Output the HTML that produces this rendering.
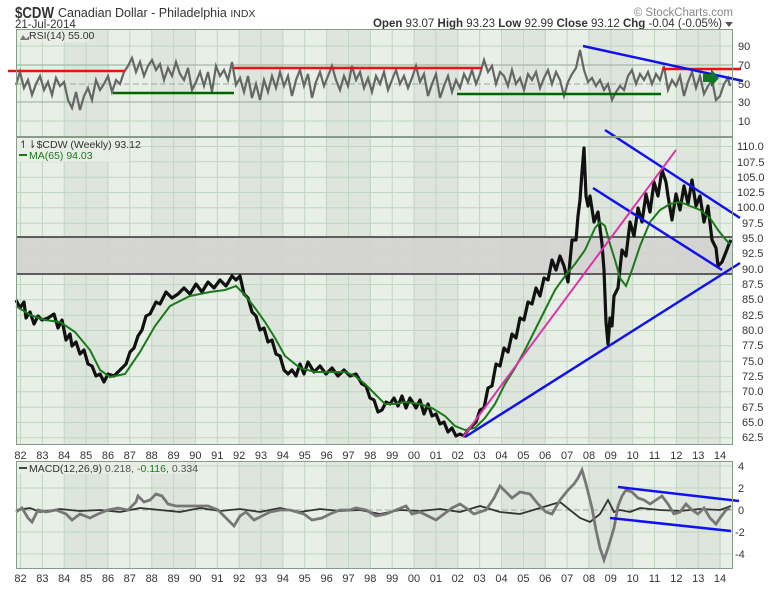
<!DOCTYPE html>
<html><head><meta charset="utf-8"><style>
body{margin:0;background:#fff;width:780px;height:586px;overflow:hidden;font-family:"Liberation Sans",sans-serif}
svg text{font-family:"Liberation Sans",sans-serif}
</style></head><body>
<svg width="780" height="586" xmlns="http://www.w3.org/2000/svg">
<!-- header -->
<text x="15" y="18" font-size="16" font-weight="bold" fill="#333" textLength="39" lengthAdjust="spacingAndGlyphs">$CDW</text>
<text x="58" y="17" font-size="12.5" fill="#333">Canadian Dollar - Philadelphia <tspan font-size="10.5">INDX</tspan></text>
<text x="15" y="28" font-size="11.5" fill="#333">21-Jul-2014</text>
<text x="733" y="16" font-size="11.5" fill="#888" text-anchor="end">© StockCharts.com</text>
<text x="722" y="27" font-size="11.5" fill="#333" text-anchor="end"><tspan font-weight="bold">Open</tspan> 93.07  <tspan font-weight="bold">High</tspan> 93.23  <tspan font-weight="bold">Low</tspan> 92.99  <tspan font-weight="bold">Close</tspan> 93.12  <tspan font-weight="bold">Chg</tspan> -0.04 (-0.05%)</text>
<path d="M725 22h8l-4 5z" fill="#555"/>

<!-- panel backgrounds -->
<g fill="#e8efe6">
<rect x="16" y="29" width="717" height="108"/>
<rect x="16" y="137" width="717" height="308"/>
<rect x="16" y="461" width="717" height="108"/>
</g>
<g fill="#dde5dc">
<rect x="64" y="29" width="44" height="108"/><rect x="152" y="29" width="44" height="108"/><rect x="239" y="29" width="44" height="108"/><rect x="327" y="29" width="44" height="108"/><rect x="414" y="29" width="44" height="108"/><rect x="502" y="29" width="44" height="108"/><rect x="589" y="29" width="44" height="108"/><rect x="677" y="29" width="44" height="108"/>
<rect x="64" y="137" width="44" height="308"/><rect x="152" y="137" width="44" height="308"/><rect x="239" y="137" width="44" height="308"/><rect x="327" y="137" width="44" height="308"/><rect x="414" y="137" width="44" height="308"/><rect x="502" y="137" width="44" height="308"/><rect x="589" y="137" width="44" height="308"/><rect x="677" y="137" width="44" height="308"/>
<rect x="64" y="461" width="44" height="108"/><rect x="152" y="461" width="44" height="108"/><rect x="239" y="461" width="44" height="108"/><rect x="327" y="461" width="44" height="108"/><rect x="414" y="461" width="44" height="108"/><rect x="502" y="461" width="44" height="108"/><rect x="589" y="461" width="44" height="108"/><rect x="677" y="461" width="44" height="108"/>
</g>
<!-- vertical grid -->
<g stroke="#bfd6bf" stroke-width="1">
<path d="M20.5 29V137M42.4 29V137M64.2 29V137M86.1 29V137M108 29V137M129.8 29V137M151.7 29V137M173.6 29V137M195.4 29V137M217.3 29V137M239.1 29V137M261 29V137M282.9 29V137M304.7 29V137M326.6 29V137M348.5 29V137M370.3 29V137M392.2 29V137M414 29V137M435.9 29V137M457.8 29V137M479.6 29V137M501.5 29V137M523.4 29V137M545.2 29V137M567.1 29V137M589 29V137M610.8 29V137M632.7 29V137M654.5 29V137M676.4 29V137M698.3 29V137M720 29V137"/>
<path d="M20.5 137V445M42.4 137V445M64.2 137V445M86.1 137V445M108 137V445M129.8 137V445M151.7 137V445M173.6 137V445M195.4 137V445M217.3 137V445M239.1 137V445M261 137V445M282.9 137V445M304.7 137V445M326.6 137V445M348.5 137V445M370.3 137V445M392.2 137V445M414 137V445M435.9 137V445M457.8 137V445M479.6 137V445M501.5 137V445M523.4 137V445M545.2 137V445M567.1 137V445M589 137V445M610.8 137V445M632.7 137V445M654.5 137V445M676.4 137V445M698.3 137V445M720 137V445"/>
<path d="M20.5 461V569M42.4 461V569M64.2 461V569M86.1 461V569M108 461V569M129.8 461V569M151.7 461V569M173.6 461V569M195.4 461V569M217.3 461V569M239.1 461V569M261 461V569M282.9 461V569M304.7 461V569M326.6 461V569M348.5 461V569M370.3 461V569M392.2 461V569M414 461V569M435.9 461V569M457.8 461V569M479.6 461V569M501.5 461V569M523.4 461V569M545.2 461V569M567.1 461V569M589 461V569M610.8 461V569M632.7 461V569M654.5 461V569M676.4 461V569M698.3 461V569M720 461V569"/>
<path d="M16 146.5H733M16 161.8H733M16 177.2H733M16 192.5H733M16 207.8H733M16 223.2H733M16 238.5H733M16 253.8H733M16 269.2H733M16 284.5H733M16 299.8H733M16 315.2H733M16 330.5H733M16 345.8H733M16 361.2H733M16 376.5H733M16 391.8H733M16 407.2H733M16 422.5H733M16 437.8H733"/>
<path d="M16 46H733M16 121H733M16 466H733M16 488H733M16 532H733M16 554H733"/>
</g>
<g stroke="#9aaa9a" stroke-width="1">
<path d="M16 65H733M16 102H733"/>
<path d="M16 84H733M16 510H733" stroke-dasharray="6 3"/>
</g>
<!-- gray band -->
<rect x="16" y="237" width="717" height="37" fill="#d3d3d0" opacity="0.9"/>
<path d="M16 237H733M16 274H733" stroke="#333" stroke-width="1.5"/>

<!-- RSI line -->
<polyline fill="none" stroke="#666" stroke-width="2.2" points="16,85 20,72 24,88 28,80 32,95 36,84 40,76 44,90 48,82 52,95 56,78 60,86 64,82 68,100 72,108 76,92 80,110 84,96 88,88 92,100 96,80 100,90 104,84 108,76 112,92 116,80 120,84 124,72 128,66 132,58 136,72 140,62 144,76 148,66 152,60 156,70 160,64 164,80 168,68 172,76 176,62 180,74 184,80 188,68 192,90 196,82 200,72 204,86 208,72 212,92 216,66 220,76 224,70 228,80 232,62 236,85 240,78 244,92 248,76 252,98 256,84 260,100 264,80 268,92 272,76 276,88 280,72 284,86 288,76 292,96 296,80 300,70 304,86 308,74 312,98 316,82 320,72 324,86 328,76 332,66 336,80 340,90 344,76 348,86 352,66 356,80 360,72 364,88 368,78 372,92 376,76 380,84 384,72 388,90 392,80 396,70 400,84 404,76 408,88 412,78 416,66 420,82 424,74 428,96 432,84 436,74 440,98 444,86 448,76 452,92 456,80 460,88 464,74 468,82 472,70 476,84 480,74 484,60 488,72 492,66 496,84 500,72 504,76 508,86 512,70 516,84 520,78 524,90 528,74 532,80 536,72 540,88 544,78 548,70 552,84 556,72 560,80 564,96 568,82 572,74 576,68 580,50 584,70 588,82 592,78 596,86 600,80 604,90 608,84 612,100 616,92 620,86 624,90 628,76 632,70 636,84 640,74 644,80 648,72 652,84 656,74 660,80 664,66 668,90 672,80 676,86 680,76 684,96 688,82 692,72 696,88 700,76 704,94 708,86 712,80 716,100 720,96 724,84 728,78 730,86"/>
<path d="M8 71H125M234 68H482M662 69H741" stroke="#e11" stroke-width="2.5"/>
<path d="M113 93H234M457 94H661" stroke="#060" stroke-width="2.5"/>
<path d="M583 46L743 81" stroke="#11e" stroke-width="2.5"/>
<path d="M703 74h8v-5l8 9-8 9v-5h-8z" fill="#172"/>
<rect x="17" y="30" width="72" height="12" fill="#e8efe6" opacity="0.8"/>
<path d="M20 40l3-5 3 4 3-3v4z" fill="#777"/>
<text x="29" y="39" font-size="10.5" fill="#333">RSI(14) 55.00</text>

<!-- price -->
<polyline fill="none" stroke="#111" stroke-width="3.2" stroke-linejoin="round" points="16,300 20,308 24,302 26,318 30,312 34,324 38,316 42,320 48,318 54,314 58,328 62,320 66,340 70,334 72,346 76,342 80,354 84,350 88,364 92,366 96,376 100,374 104,382 108,374 114,376 120,370 126,364 130,352 134,348 138,336 142,330 146,316 150,314 156,302 160,304 166,292 172,298 178,294 184,288 190,294 196,284 202,292 208,282 214,288 220,280 226,286 232,276 236,280 240,276 244,294 248,298 252,312 256,316 260,330 264,328 268,342 272,340 276,354 280,356 284,370 288,374 292,370 296,376 300,364 304,374 308,362 314,372 320,366 326,374 332,368 338,376 344,370 350,376 356,374 362,384 366,386 370,398 374,400 378,412 382,410 386,402 390,404 394,398 398,406 402,396 406,408 410,398 416,408 420,400 424,414 428,404 432,416 436,414 440,424 444,422 448,432 452,428 456,436 460,434 464,436 468,430 472,426 476,422 480,410 484,408 488,388 492,386 496,364 500,366 504,348 508,352 512,334 516,338 520,318 524,320 528,302 532,304 536,288 540,296 544,278 548,280 552,260 556,270 560,256 564,266 568,282 572,240 576,240 578,216 580,200 582,172 584,148 586,196 588,206 590,196 594,222 598,212 602,244 604,270 606,322 608,344 610,318 612,326 614,296 618,288 622,250 626,256 630,222 634,236 638,208 642,222 646,194 650,212 654,182 658,196 662,170 666,182 668,196 672,220 676,194 680,210 684,186 688,204 692,180 696,206 700,196 704,222 708,206 712,240 716,248 718,266 722,262 726,252 729,244 731,240"/>
<polyline fill="none" stroke="#1a7a1a" stroke-width="2" points="16,306 30,315 45,320 60,322 75,332 90,350 100,370 110,377 125,374 140,352 155,326 170,306 190,296 210,292 225,290 236,286 245,295 255,308 265,322 275,338 285,356 300,368 315,372 330,372 345,372 355,376 365,384 375,394 385,404 395,404 405,402 420,404 432,408 445,416 455,426 465,430 475,428 485,418 495,404 505,384 515,368 525,350 535,330 545,310 555,290 565,276 575,264 585,250 595,228 600,222 605,226 610,244 615,260 620,278 626,286 632,270 640,246 650,222 660,210 670,204 680,202 690,206 700,210 710,218 718,230 726,240 730,244"/>
<path d="M605 130L740 218M593 188L722 270M465 437L740 263" stroke="#11e" stroke-width="2.5"/>
<path d="M463 437L676 150" stroke="#d3a" stroke-width="2"/>
<rect x="17" y="138" width="112" height="24" fill="#e8efe6" opacity="0.8"/>
<text x="19" y="148" font-size="10.5" fill="#333">↿⇂$CDW (Weekly) 93.12</text>
<path d="M19 155h8" stroke="#1a7a1a" stroke-width="2"/>
<text x="29" y="159" font-size="10.5" fill="#1a7a1a">MA(65) 94.03</text>

<!-- MACD -->
<polyline fill="none" stroke="#333" stroke-width="1.8" points="16,510 30,508 40,512 60,509 80,511 100,510 120,512 140,508 160,510 180,512 200,508 220,511 240,509 260,512 280,508 300,512 320,509 340,511 360,510 380,514 400,510 420,511 440,509 460,512 480,506 500,512 520,514 540,508 560,502 570,510 580,518 590,522 600,514 608,500 614,512 620,510 630,512 640,508 660,510 680,511 700,509 720,510 731,506"/>
<polyline fill="none" stroke="#777" stroke-width="2.8" points="16,512 22,508 28,518 32,522 38,510 46,512 56,510 66,514 72,520 80,514 90,518 98,514 108,510 118,508 128,510 136,502 138,496 144,502 150,500 156,494 162,496 168,504 176,506 186,506 196,506 208,506 218,510 226,518 234,526 240,516 246,512 254,520 262,516 270,512 280,510 290,510 304,514 312,520 322,518 330,514 340,510 350,510 356,508 366,510 376,516 386,514 396,510 406,506 412,514 420,512 428,516 436,520 444,514 452,508 460,504 466,508 474,514 486,510 494,498 500,486 506,492 512,498 520,492 530,494 538,504 546,512 552,514 560,500 568,490 574,484 578,478 582,470 586,484 592,508 596,530 600,548 604,560 608,548 614,528 618,506 622,496 626,490 632,492 638,498 644,500 650,504 656,500 662,496 668,504 674,514 680,512 686,504 692,510 698,514 704,508 710,518 716,524 720,518 726,510 730,508"/>
<path d="M618 487L739 501M610 518L731 531" stroke="#11e" stroke-width="2.5"/>
<rect x="17" y="462" width="170" height="12" fill="#e8efe6" opacity="0.8"/>
<path d="M19 468h8" stroke="#444" stroke-width="2"/>
<text x="29" y="472" font-size="10.5" fill="#333">MACD(12,26,9) <tspan fill="#555">0.218,</tspan> <tspan fill="#1a7a1a">-0.116</tspan><tspan fill="#555">, 0.334</tspan></text>

<!-- panel borders -->
<g fill="none" stroke="#8a9a8a" stroke-width="1">
<rect x="16.5" y="29.5" width="716" height="107"/>
<rect x="16.5" y="137.5" width="716" height="307"/>
<rect x="16.5" y="461.5" width="716" height="107"/>
</g>

<!-- right axes -->
<g font-size="11" fill="#333">
<text x="738" y="50">90</text><text x="738" y="69">70</text><text x="738" y="88">50</text><text x="738" y="106">30</text><text x="738" y="125">10</text>
<text x="737" y="150">110.0</text><text x="737" y="166">107.5</text><text x="737" y="181">105.0</text><text x="737" y="196">102.5</text><text x="737" y="211">100.0</text><text x="742" y="227">97.5</text><text x="742" y="242">95.0</text><text x="742" y="257">92.5</text><text x="742" y="273">90.0</text><text x="742" y="288">87.5</text><text x="742" y="303">85.0</text><text x="742" y="319">82.5</text><text x="742" y="334">80.0</text><text x="742" y="349">77.5</text><text x="742" y="365">75.0</text><text x="742" y="380">72.5</text><text x="742" y="395">70.0</text><text x="742" y="411">67.5</text><text x="742" y="426">65.0</text><text x="742" y="441">62.5</text>
<text x="738" y="470">4</text><text x="738" y="492">2</text><text x="738" y="514">0</text><text x="735" y="536">-2</text><text x="735" y="558">-4</text>
</g>
<g font-size="11" fill="#333" text-anchor="middle">
<text x="20.5" y="459">82</text><text x="42.4" y="459">83</text><text x="64.2" y="459">84</text><text x="86.1" y="459">85</text><text x="108" y="459">86</text><text x="129.8" y="459">87</text><text x="151.7" y="459">88</text><text x="173.6" y="459">89</text><text x="195.4" y="459">90</text><text x="217.3" y="459">91</text><text x="239.1" y="459">92</text><text x="261" y="459">93</text><text x="282.9" y="459">94</text><text x="304.7" y="459">95</text><text x="326.6" y="459">96</text><text x="348.5" y="459">97</text><text x="370.3" y="459">98</text><text x="392.2" y="459">99</text><text x="414" y="459">00</text><text x="435.9" y="459">01</text><text x="457.8" y="459">02</text><text x="479.6" y="459">03</text><text x="501.5" y="459">04</text><text x="523.4" y="459">05</text><text x="545.2" y="459">06</text><text x="567.1" y="459">07</text><text x="589" y="459">08</text><text x="610.8" y="459">09</text><text x="632.7" y="459">10</text><text x="654.5" y="459">11</text><text x="676.4" y="459">12</text><text x="698.3" y="459">13</text><text x="720" y="459">14</text>
</g>
<g font-size="11" fill="#333" text-anchor="middle">
<text x="20.5" y="582">82</text><text x="42.4" y="582">83</text><text x="64.2" y="582">84</text><text x="86.1" y="582">85</text><text x="108" y="582">86</text><text x="129.8" y="582">87</text><text x="151.7" y="582">88</text><text x="173.6" y="582">89</text><text x="195.4" y="582">90</text><text x="217.3" y="582">91</text><text x="239.1" y="582">92</text><text x="261" y="582">93</text><text x="282.9" y="582">94</text><text x="304.7" y="582">95</text><text x="326.6" y="582">96</text><text x="348.5" y="582">97</text><text x="370.3" y="582">98</text><text x="392.2" y="582">99</text><text x="414" y="582">00</text><text x="435.9" y="582">01</text><text x="457.8" y="582">02</text><text x="479.6" y="582">03</text><text x="501.5" y="582">04</text><text x="523.4" y="582">05</text><text x="545.2" y="582">06</text><text x="567.1" y="582">07</text><text x="589" y="582">08</text><text x="610.8" y="582">09</text><text x="632.7" y="582">10</text><text x="654.5" y="582">11</text><text x="676.4" y="582">12</text><text x="698.3" y="582">13</text><text x="720" y="582">14</text>
</g>
</svg>
</body></html>
